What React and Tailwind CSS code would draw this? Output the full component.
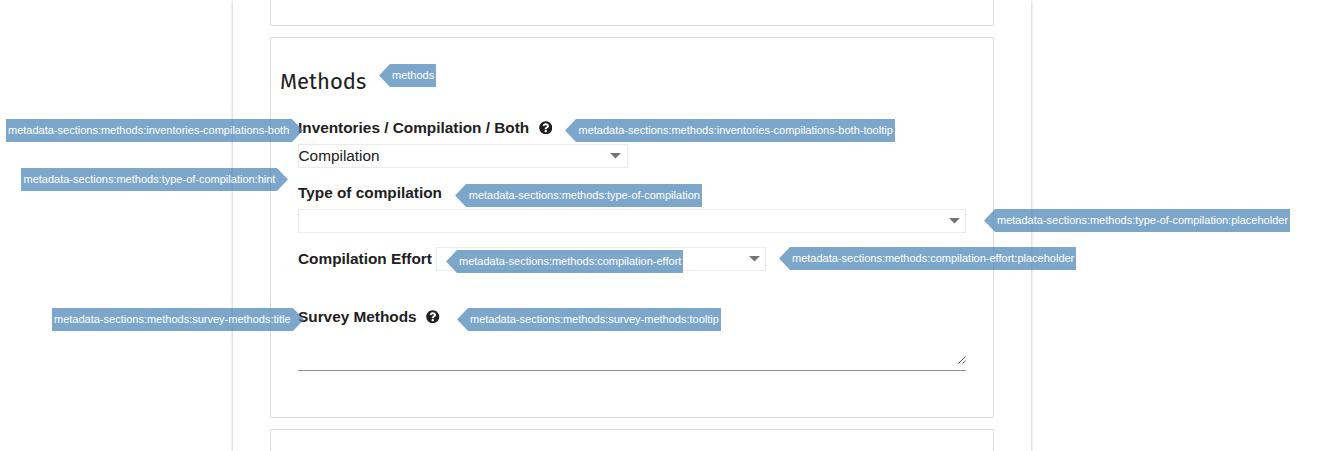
import React from 'react';
import { FaQuestionCircle } from 'react-icons/fa';

function Tag({ side = 'left', className, children }) {
  const shape =
    side === 'left'
      ? 'pl-[13px] [clip-path:polygon(0_50%,11px_0,100%_0,100%_100%,11px_100%)]'
      : 'pl-[2px] [clip-path:polygon(0_0,calc(100%-11px)_0,100%_50%,calc(100%-11px)_100%,0_100%)]';
  return (
    <span
      className={`absolute h-[23px] whitespace-nowrap bg-[#4682b4] text-[11px] leading-[23px] text-white opacity-70 ${shape} ${className}`}
    >
      {children}
    </span>
  );
}

function Select({ value, className }) {
  return (
    <div
      className={`flex h-6 items-center justify-between border border-[#ebebeb] text-[15.36px] leading-[22px] ${className}`}
    >
      <span className="-ml-[0.5px]">{value}</span>
      <svg width="11" height="6" viewBox="0 0 11 6" className="fill-[#757575]">
        <path d="M0 0h11L5.5 5.5z" />
      </svg>
    </div>
  );
}

function Label({ help, children }) {
  return (
    <div className="flex h-5 items-center gap-[9.5px] text-[15.36px] leading-5 font-bold">
      {children}
      {help && <FaQuestionCircle className="mb-px size-[13.5px]" />}
    </div>
  );
}

export default function App() {
  return (
    <div className="relative flex h-[451px] w-[1321px] justify-center overflow-hidden bg-white pr-[57px] font-['Liberation_Sans',Arial,sans-serif] text-[#212121]">
      <main className="flex w-[798px] flex-col items-center gap-[11px] bg-white shadow-[0_1px_3px_rgba(0,0,0,0.3)]">
        <section className="h-[26px] w-[724px] shrink-0 rounded-b-[2px] border border-t-0 border-[#dcdcdc]" />
        <section className="flex h-[381px] w-[724px] shrink-0 flex-col gap-5 rounded-[2px] border border-[#dcdcdc] px-[9px] pt-[28px]">
          <h2 className="h-8 font-['Fira_Sans','Noto_Sans',sans-serif] text-[22px] leading-8">
            Methods
          </h2>
          <div className="flex flex-col px-[18px]">
            <div className="flex flex-col gap-[15px]">
              <div className="flex flex-col gap-1.5">
                <Label help>Inventories / Compilation / Both</Label>
                <Select value="Compilation" className="w-[330px] pr-[6px]" />
              </div>
              <div className="flex flex-col gap-1.5">
                <Label>Type of compilation</Label>
                <Select className="w-[668px] pr-[5px]" />
              </div>
            </div>
            <div className="flex items-center gap-1 pt-3.5 pb-9">
              <Label>Compilation Effort</Label>
              <Select className="w-[330px] pr-[5px]" />
            </div>
            <div className="flex flex-col gap-[11px]">
              <Label help>Survey Methods</Label>
              <div className="flex h-[33px] w-[668px] items-end justify-end border-b border-[#919191] pb-[6px]">
                <svg width="8" height="8" viewBox="0 0 8 8" className="stroke-[#555]">
                  <path d="M.5 7.5l7-7M4.5 7.5l3-3" />
                </svg>
              </div>
            </div>
          </div>
        </section>
        <section className="h-[30px] w-[724px] shrink-0 rounded-t-[2px] border border-b-0 border-[#dcdcdc]" />
      </main>

      <Tag className="top-[64px] left-[379px] w-[57px]">methods</Tag>
      <Tag side="right" className="top-[119px] left-[6px] w-[297px]">
        metadata-sections:methods:inventories-compilations-both
      </Tag>
      <Tag className="top-[119px] left-[565px] w-[330px] indent-[0.5px]">
        metadata-sections:methods:inventories-compilations-both-tooltip
      </Tag>
      <Tag side="right" className="top-[168px] left-[21px] w-[267px] indent-[0.5px]">
        metadata-sections:methods:type-of-compilation:hint
      </Tag>
      <Tag className="top-[184px] left-[455px] w-[247px] indent-[0.75px]">
        metadata-sections:methods:type-of-compilation
      </Tag>
      <Tag className="top-[209px] left-[984px] w-[306px]">
        metadata-sections:methods:type-of-compilation:placeholder
      </Tag>
      <Tag className="top-[250px] left-[446px] w-[237px]">
        metadata-sections:methods:compilation-effort
      </Tag>
      <Tag className="top-[247px] left-[779px] w-[297px]">
        metadata-sections:methods:compilation-effort:placeholder
      </Tag>
      <Tag side="right" className="top-[308px] left-[52px] w-[252px]">
        metadata-sections:methods:survey-methods:title
      </Tag>
      <Tag className="top-[308px] left-[457px] w-[264px]">
        metadata-sections:methods:survey-methods:tooltip
      </Tag>
    </div>
  );
}
